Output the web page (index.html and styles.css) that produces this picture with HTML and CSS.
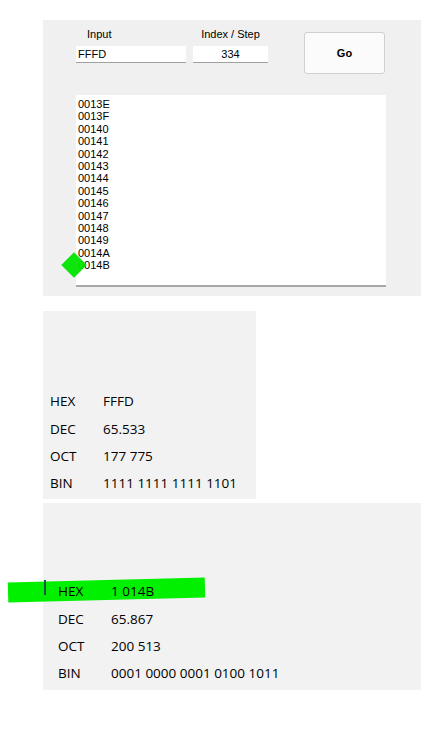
FILE: index.html
```html
<!DOCTYPE html>
<html lang="en">
<head>
  <meta charset="UTF-8" />
  <title>Hex Stepper</title>
  <link rel="stylesheet" href="styles.css">
</head>
<body>

  <!-- Input form + result list -->
  <div class="panel form-panel">
    <div class="form-row">
      <div class="field field-input">
        <label>Input</label>
        <div class="box">FFFD</div>
      </div>
      <div class="field field-step">
        <label>Index / Step</label>
        <div class="box center">334</div>
      </div>
      <button class="go-btn">Go</button>
    </div>

    <div class="list-box">
      <div>0013E</div>
      <div>0013F</div>
      <div>00140</div>
      <div>00141</div>
      <div>00142</div>
      <div>00143</div>
      <div>00144</div>
      <div>00145</div>
      <div>00146</div>
      <div>00147</div>
      <div>00148</div>
      <div>00149</div>
      <div>0014A</div>
      <div class="marked">0014B<span class="diamond"></span></div>
    </div>
  </div>

  <!-- Source value -->
  <div class="panel value-panel narrow">
    <div class="row"><span class="key">HEX</span><span>FFFD</span></div>
    <div class="row"><span class="key">DEC</span><span>65.533</span></div>
    <div class="row"><span class="key">OCT</span><span>177 775</span></div>
    <div class="row"><span class="key">BIN</span><span>1111 1111 1111 1101</span></div>
  </div>

  <!-- Result value -->
  <div class="panel value-panel wide">
    <div class="row highlighted"><span class="caret"></span><span class="key">HEX</span><span>1 014B</span></div>
    <div class="row"><span class="key">DEC</span><span>65.867</span></div>
    <div class="row"><span class="key">OCT</span><span>200 513</span></div>
    <div class="row"><span class="key">BIN</span><span>0001 0000 0001 0100 1011</span></div>
  </div>

</body>
</html>
```

FILE: styles.css
```css
body {
  margin: 0;
  padding-top: 20px;
  background: #fff;
  font-family: "Liberation Sans", Arial, sans-serif;
  color: #000;
}

.panel {
  margin-left: 43px;
  box-sizing: border-box;
}

/* Top form */
.form-panel {
  background: #f0f0f0;
  width: 378px;
  height: 276px;
  padding: 7px 0 0 33px;
  font-size: 11px;
}

.form-row {
  display: flex;
  align-items: flex-start;
}

.field label {
  display: block;
  height: 14px;
  line-height: 14px;
  margin-bottom: 5px;
}

.field-input {
  width: 110px;
  margin-right: 7px;
}

.field-input label {
  padding-left: 11px;
}

.field-step {
  width: 75px;
  margin-right: 36px;
}

.field-step label {
  text-align: center;
}

.box {
  height: 16px;
  line-height: 16px;
  background: #fff;
  border-bottom: 1px solid #a0a0a0;
  padding-left: 2px;
}

.box.center {
  text-align: center;
  padding-left: 0;
}

.go-btn {
  margin-top: 5px;
  width: 81px;
  height: 42px;
  background: #fbfbfb;
  border: 1px solid #d0d0d0;
  border-radius: 3px;
  font-family: "Liberation Sans", Arial, sans-serif;
  font-size: 11px;
  font-weight: bold;
  color: #000;
}

.list-box {
  margin-top: 21px;
  width: 310px;
  height: 192px;
  box-sizing: border-box;
  background: #fff;
  border-bottom: 2px solid #a8a8a8;
  padding: 3px 0 0 2px;
  line-height: 12.4px;
}

.marked {
  position: relative;
}

.diamond {
  position: absolute;
  left: -13px;
  top: -3px;
  width: 18px;
  height: 18px;
  background: #00e400;
  transform: rotate(45deg);
  opacity: 0.95;
}

/* Value panels */
.value-panel {
  background: #f2f2f2;
  font-family: "Open Sans", "Noto Sans", sans-serif;
  font-size: 13.5px;
  display: flex;
  flex-direction: column;
  justify-content: flex-end;
}

.narrow {
  margin-top: 15px;
  width: 213px;
  height: 188px;
  padding: 0 0 2px 7px;
}

.wide {
  margin-top: 4px;
  width: 378px;
  height: 187px;
  padding: 0 0 3px 15px;
}

.row {
  display: flex;
  height: 27.3px;
  align-items: center;
  position: relative;
}

.key {
  width: 53px;
}

.highlighted {
  z-index: 0;
}

/* marker stroke over the first result row */
.highlighted::before {
  content: "";
  position: absolute;
  left: -50px;
  top: 2px;
  width: 197px;
  height: 20px;
  background: #00f000;
  transform: rotate(-1.5deg);
  z-index: -1;
}

.caret {
  position: absolute;
  left: -14px;
  top: 2px;
  width: 2px;
  height: 15px;
  background: #1f5a40;
}
```
